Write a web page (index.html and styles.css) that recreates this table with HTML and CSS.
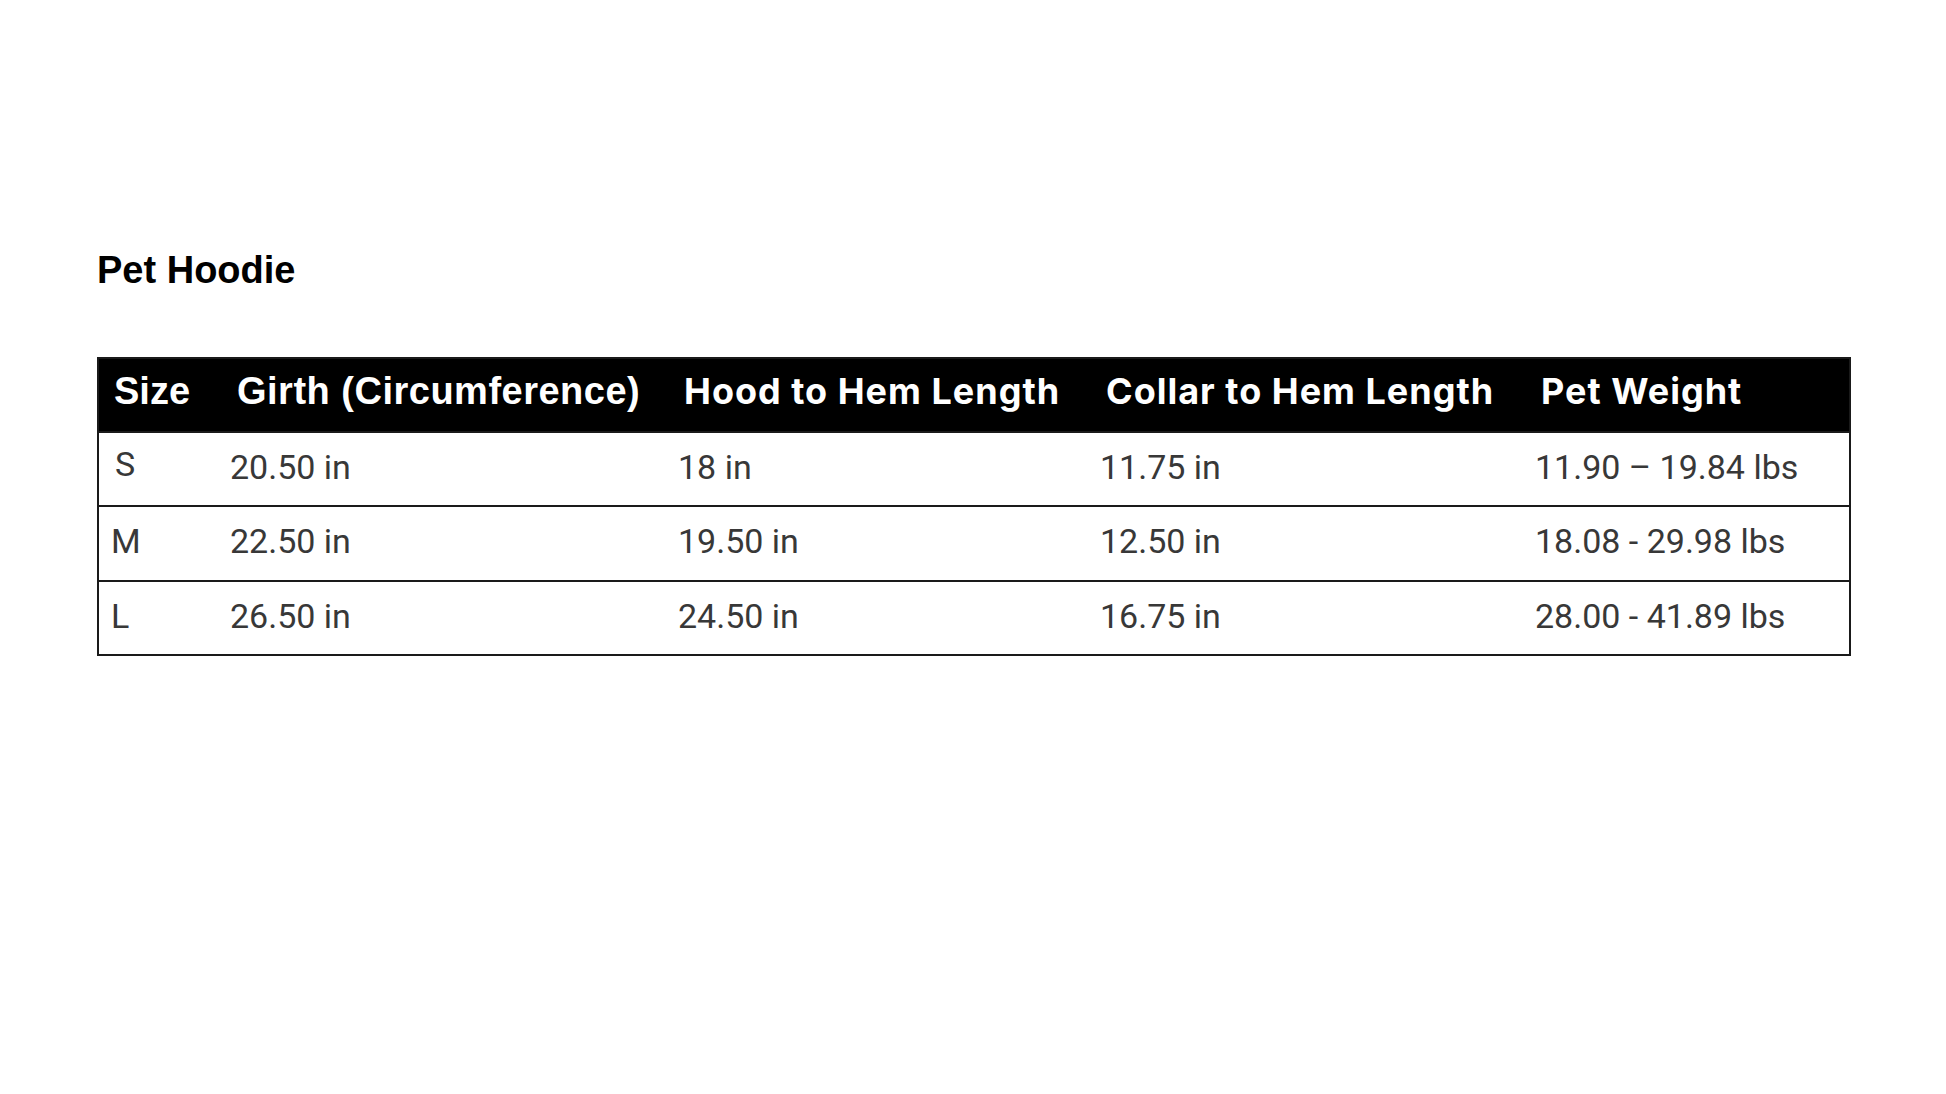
FILE: index.html
```html
<!DOCTYPE html>
<html lang="en">
<head>
<meta charset="utf-8">
<title>Pet Hoodie Size Chart</title>
<link rel="stylesheet" href="styles.css">
</head>
<body>
<main class="page">
  <h1 class="title">Pet Hoodie</h1>
  <table class="size-table">
    <colgroup>
      <col class="col-size">
      <col class="col-girth">
      <col class="col-hood">
      <col class="col-collar">
      <col class="col-weight">
    </colgroup>
    <thead>
      <tr>
        <th class="th-arial th-size">Size</th>
        <th class="th-arial">Girth (Circumference)</th>
        <th>Hood to Hem Length</th>
        <th>Collar to Hem Length</th>
        <th>Pet Weight</th>
      </tr>
    </thead>
    <tbody>
      <tr>
        <td class="size-s">S</td>
        <td>20.50 in</td>
        <td>18 in</td>
        <td>11.75 in</td>
        <td>11.90 – 19.84 lbs</td>
      </tr>
      <tr class="row-mid">
        <td>M</td>
        <td>22.50 in</td>
        <td>19.50 in</td>
        <td>12.50 in</td>
        <td>18.08 - 29.98 lbs</td>
      </tr>
      <tr>
        <td>L</td>
        <td>26.50 in</td>
        <td>24.50 in</td>
        <td>16.75 in</td>
        <td>28.00 - 41.89 lbs</td>
      </tr>
    </tbody>
  </table>
</main>
</body>
</html>
```

FILE: styles.css
```css
html, body {
  margin: 0;
  padding: 0;
  background: #ffffff;
}

.page {
  padding: 248px 0 0 97px;
}

.title {
  margin: 0;
  font-family: "Liberation Sans", Arial, sans-serif;
  font-weight: 700;
  font-size: 38px;
  line-height: 44px;
  color: #000000;
}

.size-table {
  margin-top: 65px;
  width: 1752px;
  table-layout: fixed;
  border-collapse: collapse;
  border: 2px solid #1a1a1a;
}

.col-size { width: 120px; }
.col-girth { width: 448px; }
.col-hood { width: 422px; }
.col-collar { width: 435px; }
.col-weight { width: 327px; }

.size-table th {
  background: #000000;
  color: #ffffff;
  text-align: left;
  vertical-align: top;
  height: 74px;
  box-sizing: border-box;
  padding: 10px 0 0 18px;
  font-family: Inter, "Liberation Sans", sans-serif;
  font-weight: 700;
  font-size: 36px;
  line-height: 44px;
  letter-spacing: 1px;
  white-space: nowrap;
}

.size-table th.th-arial {
  font-family: "Liberation Sans", Arial, sans-serif;
  font-size: 38px;
  letter-spacing: 0.5px;
  padding-left: 19px;
}

.size-table th.th-size {
  padding-left: 15px;
  letter-spacing: 0;
}

.size-table td {
  height: 74px;
  box-sizing: border-box;
  border-top: 2px solid #1a1a1a;
  vertical-align: top;
  padding: 14px 0 0 12px;
  font-family: Roboto, "Liberation Sans", sans-serif;
  font-weight: 400;
  font-size: 34px;
  line-height: 40px;
  color: #383838;
  white-space: nowrap;
}

.size-table .row-mid td {
  height: 75px;
}

.size-table td.size-s {
  padding-top: 11px;
  padding-left: 16px;
}
```
